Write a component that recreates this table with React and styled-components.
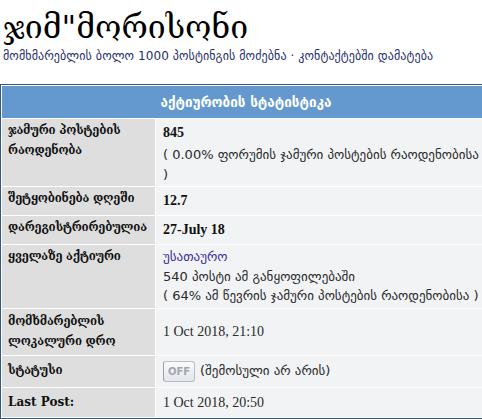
import React from 'react';
import styled, { createGlobalStyle } from 'styled-components';

const GlobalStyle = createGlobalStyle`
body {
  margin: 0;
  background: #fff;
  font-family: "DejaVu Sans", Verdana, sans-serif;
  overflow: hidden;
}
`

const Page = styled.div`
width: 492px;
`
const Title = styled.h1`
margin: 7px 0 0 3px;
font-family: "DejaVu Serif", "Liberation Serif", serif;
font-weight: normal;
font-size: 32px;
line-height: 40px;
color: #000;
`
const SubLinks = styled.div`
margin: 1px 0 0 3px;
font-size: 12px;
line-height: 16px;
letter-spacing: 0.1px;
color: #1f2f6b;
`
const StatsTable = styled.table`
margin-top: 20px;
width: 492px;
border: 1px solid #34587c;
border-spacing: 1px;
background: #fff;
`
const HeadCell = styled.th`
background: #6499cf;
color: #fff;
font-weight: bold;
font-size: 13.5px;
height: 32px;
padding: 0;
text-align: center;
`
const Label = styled.td`
width: 147px;
background: #dedede;
padding: ${p => p.$pad || '2px'} 0 ${p => p.$pad || '2px'} 6px;
vertical-align: top;
font-family: "DejaVu Serif", "Liberation Serif", serif;
font-weight: bold;
font-size: ${p => p.$latin ? '12px' : '11.5px'};
letter-spacing: ${p => p.$latin ? '0' : '-0.2px'};
line-height: 19.5px;
color: #111;
`
const Value = styled.td`
background: #f1f3f5;
padding: ${p => p.$pad || '2px'} 4px ${p => p.$pad || '2px'} 7px;
vertical-align: ${p => p.$middle ? 'middle' : 'top'};
font-size: 13px;
line-height: 19.5px;
color: #2a2a2a;
`
const Strong = styled.div`
font-family: "Liberation Serif", serif;
font-weight: bold;
font-size: 14px;
line-height: 24px;
color: #111;
`
const DateText = styled.span`
font-family: "Liberation Serif", serif;
font-size: 14px;
`
const Link = styled.div`
color: #3b2f9b;
`
const Badge = styled.span`
display: inline-block;
width: 30px;
margin-right: 5px;
text-align: center;
border: 1px solid #b9bec6;
border-left-color: #9aa0aa;
border-radius: 3px;
background: linear-gradient(#fbfbfc, #e2e5ea);
color: #a0a5ae;
font-weight: bold;
font-size: 10px;
line-height: 19px;
vertical-align: middle;
`

const rows = [
  { label: 'ჯამური პოსტების რაოდენობა', value: <><Strong>845</Strong>( 0.00% ფორუმის ჯამური პოსტების რაოდენობისა )</> },
  { label: 'შეტყობინება დღეში', value: <Strong>12.7</Strong> },
  { label: 'დარეგისტრირებულია', value: <Strong>27-July 18</Strong> },
  { label: 'ყველაზე აქტიური', value: <><Link>უსათაურო</Link>540 პოსტი ამ განყოფილებაში<br />( 64% ამ წევრის ჯამური პოსტების რაოდენობისა )</> },
  { label: 'მომხმარებლის ლოკალური დრო', value: <DateText>1 Oct 2018, 21:10</DateText>, middle: true, pad: '3.5px' },
  { label: 'სტატუსი', value: <><Badge>OFF</Badge>(შემოსული არ არის)</>, pad: '5px' },
  { label: 'Last Post:', value: <DateText>1 Oct 2018, 20:50</DateText>, latin: true, pad: '5px' },
];

const App = () => {
  return (
    <Page>
      <GlobalStyle />
      <Title>ჯიმ"მორისონი</Title>
      <SubLinks>მომხმარებლის ბოლო 1000 პოსტინგის მოძებნა · კონტაქტებში დამატება</SubLinks>
      <StatsTable>
        <thead>
          <tr><HeadCell colSpan={2}>აქტიურობის სტატისტიკა</HeadCell></tr>
        </thead>
        <tbody>
          {rows.map(r => (
            <tr key={r.label}>
              <Label $latin={r.latin} $pad={r.pad}>{r.label}</Label>
              <Value $middle={r.middle} $pad={r.pad}>{r.value}</Value>
            </tr>
          ))}
        </tbody>
      </StatsTable>
    </Page>
  );
};

export default App;
